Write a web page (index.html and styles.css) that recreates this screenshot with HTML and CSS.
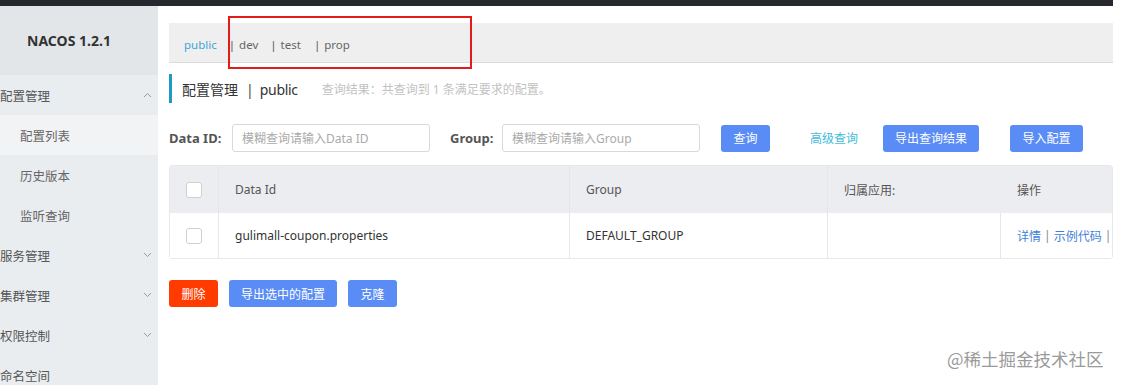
FILE: index.html
```html
<!DOCTYPE html>
<html lang="zh-CN">
<head>
    <meta charset="UTF-8">
    <title>Nacos</title>
    <link rel="stylesheet" href="styles.css">
</head>
<body>
    <div class="topbar"></div>
    <div class="layout">
        <div class="sidebar">
            <div class="logo">NACOS 1.2.1</div>
            <div class="menu-item">配置管理
                <svg class="chev" width="9" height="6" viewBox="0 0 9 6"><polyline points="1,5 4.5,1.5 8,5" fill="none" stroke="#999" stroke-width="1"/></svg>
            </div>
            <div class="sub-item active">配置列表</div>
            <div class="sub-item">历史版本</div>
            <div class="sub-item">监听查询</div>
            <div class="menu-item">服务管理
                <svg class="chev" width="9" height="6" viewBox="0 0 9 6"><polyline points="1,1 4.5,4.5 8,1" fill="none" stroke="#999" stroke-width="1"/></svg>
            </div>
            <div class="menu-item">集群管理
                <svg class="chev" width="9" height="6" viewBox="0 0 9 6"><polyline points="1,1 4.5,4.5 8,1" fill="none" stroke="#999" stroke-width="1"/></svg>
            </div>
            <div class="menu-item">权限控制
                <svg class="chev" width="9" height="6" viewBox="0 0 9 6"><polyline points="1,1 4.5,4.5 8,1" fill="none" stroke="#999" stroke-width="1"/></svg>
            </div>
            <div class="menu-item">命名空间</div>
        </div>

        <div class="main">
            <div class="ns-bar">
                <span class="ns current">public</span>
                <span class="ns"><span class="sep">|</span>dev</span>
                <span class="ns"><span class="sep">|</span>test</span>
                <span class="ns"><span class="sep">|</span>prop</span>
                <div class="highlight"></div>
            </div>

            <div class="title-row">
                <span class="title">配置管理<span class="title-sep">|</span><span class="title-ns">public</span></span>
                <span class="result">查询结果：共查询到 1 条满足要求的配置。</span>
            </div>

            <div class="search-row">
                <label class="field-label">Data ID:</label>
                <input class="field" type="text" placeholder="模糊查询请输入Data ID">
                <label class="field-label group-label">Group:</label>
                <input class="field" type="text" placeholder="模糊查询请输入Group">
                <button class="btn btn-query">查询</button>
                <a class="adv-link">高级查询</a>
                <button class="btn btn-export">导出查询结果</button>
                <button class="btn btn-import">导入配置</button>
            </div>

            <div class="table">
                <div class="tr thead">
                    <div class="td c-check"><span class="checkbox"></span></div>
                    <div class="td c-id">Data Id</div>
                    <div class="td c-group">Group</div>
                    <div class="td c-app">归属应用:</div>
                    <div class="td c-op">操作</div>
                </div>
                <div class="tr tbody">
                    <div class="td c-check"><span class="checkbox"></span></div>
                    <div class="td c-id">gulimall-coupon.properties</div>
                    <div class="td c-group">DEFAULT_GROUP</div>
                    <div class="td c-app"></div>
                    <div class="td c-op"><a class="op-link">详情</a><span class="op-sep">|</span><a class="op-link">示例代码</a><span class="op-sep">|</span></div>
                </div>
            </div>

            <div class="bottom-row">
                <button class="btn btn-delete">删除</button>
                <button class="btn btn-sel">导出选中的配置</button>
                <button class="btn btn-clone">克隆</button>
            </div>
        </div>
    </div>
    <div class="watermark">@稀土掘金技术社区</div>
</body>
</html>
```

FILE: styles.css
```css
* { box-sizing: border-box; }
body {
    margin: 0;
    width: 1122px;
    height: 385px;
    overflow: hidden;
    background: #fff;
    font-family: "Noto Sans", "Noto Sans CJK SC", sans-serif;
    font-size: 12px;
    color: #333;
    position: relative;
}
.topbar {
    height: 6px;
    width: 1113px;
    background: #25292e;
}
.layout {
    display: flex;
    height: 379px;
}

/* sidebar */
.sidebar {
    width: 158px;
    flex-shrink: 0;
    background: #eaedf0;
    overflow: hidden;
}
.logo {
    height: 69px;
    background: #e3e6e9;
    display: flex;
    align-items: center;
    justify-content: center;
    font-weight: bold;
    font-size: 14px;
    color: #333;
    padding-right: 20px;
}
.menu-item, .sub-item {
    height: 40px;
    display: flex;
    align-items: center;
    font-size: 12.5px;
    color: #555;
    position: relative;
}
.menu-item { padding-left: 0; }
.sub-item { padding-left: 20px; color: #666; }
.sub-item.active { background: #f2f3f5; }
.chev {
    position: absolute;
    left: 143px;
    top: 17px;
}

/* main */
.main {
    width: 964px;
    padding: 17px 9px 0 11px;
    overflow: hidden;
}
.ns-bar {
    position: relative;
    height: 40px;
    background: #efefef;
    border-bottom: 1px solid #dcdcdc;
    display: flex;
    align-items: center;
    padding: 3px 0 0 15px;
    color: #666;
    font-size: 11.5px;
}
.ns { margin-right: 12px; }
.ns:nth-child(3) { margin-right: 13px; }
.ns.current { color: #3ba6d8; }
.sep { margin-right: 4px; color: #555; }
.highlight {
    position: absolute;
    left: 59px;
    top: -7px;
    width: 244px;
    height: 53px;
    border: 2px solid #e31b1b;
}

.title-row {
    margin-top: 11px;
    height: 29px;
    border-left: 3px solid #1e9ac5;
    display: flex;
    align-items: center;
    padding-left: 10px;
}
.title {
    font-size: 14px;
    color: #333;
}
.title-sep { margin: 0 6px 0 8px; color: #444; }
.title-ns { font-size: 14px; letter-spacing: -0.3px; }
.result {
    margin-left: 24px;
    font-size: 12px;
    color: #c2c2c2;
}

.search-row {
    margin-top: 21px;
    height: 28px;
    display: flex;
    align-items: center;
}
.field-label {
    font-weight: bold;
    font-size: 13px;
    color: #555;
    width: 63px;
}
.group-label { margin-left: 20px; width: 52px; }
.field {
    width: 198px;
    height: 28px;
    border: 1px solid #d9d9d9;
    border-radius: 3px;
    padding: 0 9px;
    font-family: inherit;
    font-size: 12px;
}
.field::placeholder { color: #aaa; }
.btn {
    height: 27px;
    border: none;
    border-radius: 3px;
    background: #5a8cf6;
    color: #fff;
    font-family: inherit;
    font-size: 12px;
    padding: 0;
}
.btn-query { width: 49px; margin-left: 21px; }
.adv-link { margin-left: 40px; color: #3fbcd9; font-size: 12px; }
.btn-export { width: 96px; margin-left: 25px; }
.btn-import { width: 73px; margin-left: 31px; }

.table {
    margin-top: 13px;
    width: 944px;
    border: 1px solid #e8e8e8;
    border-radius: 3px;
}
.tr { display: flex; }
.thead { height: 47px; background: #ecedf0; color: #555; }
.tbody { height: 45px; background: #fff; }
.td {
    display: flex;
    align-items: center;
    padding-left: 16px;
    border-right: 1px solid #e6e6e6;
    white-space: nowrap;
    overflow: hidden;
}
.c-check { width: 49px; justify-content: center; padding-left: 0; }
.c-id { width: 351px; }
.c-group { width: 258px; }
.c-app { width: 173px; }
.c-op { flex: 1; border-right: none; }
.thead .c-app { border-right: none; }
.checkbox {
    width: 16px;
    height: 16px;
    border: 1px solid #d0d0d0;
    border-radius: 3px;
    background: #fff;
}
.op-link { color: #3f7fd6; }
.op-sep { margin: 0 3px; color: #888; }

.bottom-row {
    margin-top: 21px;
    display: flex;
    gap: 11px;
}
.btn-delete { width: 49px; background: #ff3b00; }
.btn-sel { width: 108px; }
.btn-clone { width: 49px; }

.watermark {
    position: absolute;
    left: 947px;
    top: 346px;
    font-family: "Noto Sans CJK SC", sans-serif;
    font-size: 17.5px;
    color: #9a9a9a;
}
```
